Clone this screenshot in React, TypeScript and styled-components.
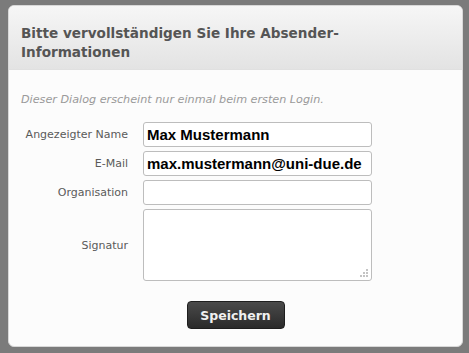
import styled, { createGlobalStyle } from "styled-components";

const GlobalStyle = createGlobalStyle`
  html, body {
    margin: 0;
    padding: 0;
    background: #7b7b7b;
    font-family: "DejaVu Sans", Verdana, sans-serif;
  }
`;

interface Field {
  label: string;
  value: string;
}

const fields: Field[] = [
  { label: "Angezeigter Name", value: "Max Mustermann" },
  { label: "E-Mail", value: "max.mustermann@uni-due.de" },
  { label: "Organisation", value: "" },
];

const App = () => {
  return (
    <Page>
      <GlobalStyle />
      <Dialog>
        <Header>
          <Title>
            Bitte vervollständigen Sie Ihre Absender-
            <br />
            Informationen
          </Title>
        </Header>
        <Body>
          <Hint>Dieser Dialog erscheint nur einmal beim ersten Login.</Hint>
          <Form>
            {fields.map((f) => (
              <Row key={f.label}>
                <Label>{f.label}</Label>
                <Input defaultValue={f.value} />
              </Row>
            ))}
            <Row>
              <Label>Signatur</Label>
              <Area>
                <Grip viewBox="0 0 10 10">
                  <rect x="7" y="1" width="2" height="2" />
                  <rect x="4" y="4" width="2" height="2" />
                  <rect x="7" y="4" width="2" height="2" />
                  <rect x="1" y="7" width="2" height="2" />
                  <rect x="4" y="7" width="2" height="2" />
                  <rect x="7" y="7" width="2" height="2" />
                </Grip>
              </Area>
            </Row>
          </Form>
          <Actions>
            <SaveButton>Speichern</SaveButton>
          </Actions>
        </Body>
      </Dialog>
    </Page>
  );
};

export default App;

const Page = styled.div`
  width: 469px;
  height: 353px;
  padding: 5px 0 0 8px;
  box-sizing: border-box;
  overflow: hidden;
`;

const Dialog = styled.div`
  width: 455px;
  height: 342px;
  border-radius: 6px;
  border: 1px solid #d8d8d8;
  box-sizing: border-box;
  background: #fcfcfc;
  overflow: hidden;
  display: flex;
  flex-direction: column;
`;

const Header = styled.div`
  height: 64px;
  box-sizing: border-box;
  padding: 18px 12px 0 12px;
  background: linear-gradient(#f6f6f6, #e3e3e3);
  border-bottom: 1px solid #e0e0e0;
`;

const Title = styled.h1`
  margin: 0;
  font-size: 13.6px;
  line-height: 19px;
  font-weight: bold;
  color: #555;
`;

const Body = styled.div`
  padding: 23px 12px 0 12px;
`;

const Hint = styled.p`
  margin: 0 0 15px 0;
  font-size: 11.2px;
  line-height: 14px;
  font-style: italic;
  color: #9a9a9a;
`;

const Form = styled.div`
  display: flex;
  flex-direction: column;
  gap: 4px;
`;

const Row = styled.div`
  display: grid;
  grid-template-columns: 107px 229px;
  column-gap: 15px;
  align-items: center;
`;

const Label = styled.span`
  text-align: right;
  font-size: 11px;
  color: #5a5a5a;
`;

const Input = styled.input`
  height: 25px;
  box-sizing: border-box;
  border: 1px solid #bdbdbd;
  border-radius: 3px;
  padding: 0 3px;
  background: #fff;
  font-family: "Liberation Sans", Arial, sans-serif;
  font-weight: bold;
  font-size: 15px;
  color: #000;
  outline: none;
`;

const Area = styled.div`
  position: relative;
  height: 72px;
  box-sizing: border-box;
  border: 1px solid #bdbdbd;
  border-radius: 3px;
  background: #fff;
`;

const Grip = styled.svg`
  position: absolute;
  right: 2px;
  bottom: 2px;
  width: 10px;
  height: 10px;
  fill: #c4c4c4;
`;

const Actions = styled.div`
  display: flex;
  justify-content: center;
  padding-top: 20px;
`;

const SaveButton = styled.button`
  width: 98px;
  height: 28px;
  border: 1px solid #1e1e1e;
  border-radius: 4px;
  background: linear-gradient(#4a4a4a, #2a2a2a);
  color: #f0f0f0;
  font-family: "DejaVu Sans", Verdana, sans-serif;
  font-weight: bold;
  font-size: 12.5px;
  cursor: pointer;
`;
